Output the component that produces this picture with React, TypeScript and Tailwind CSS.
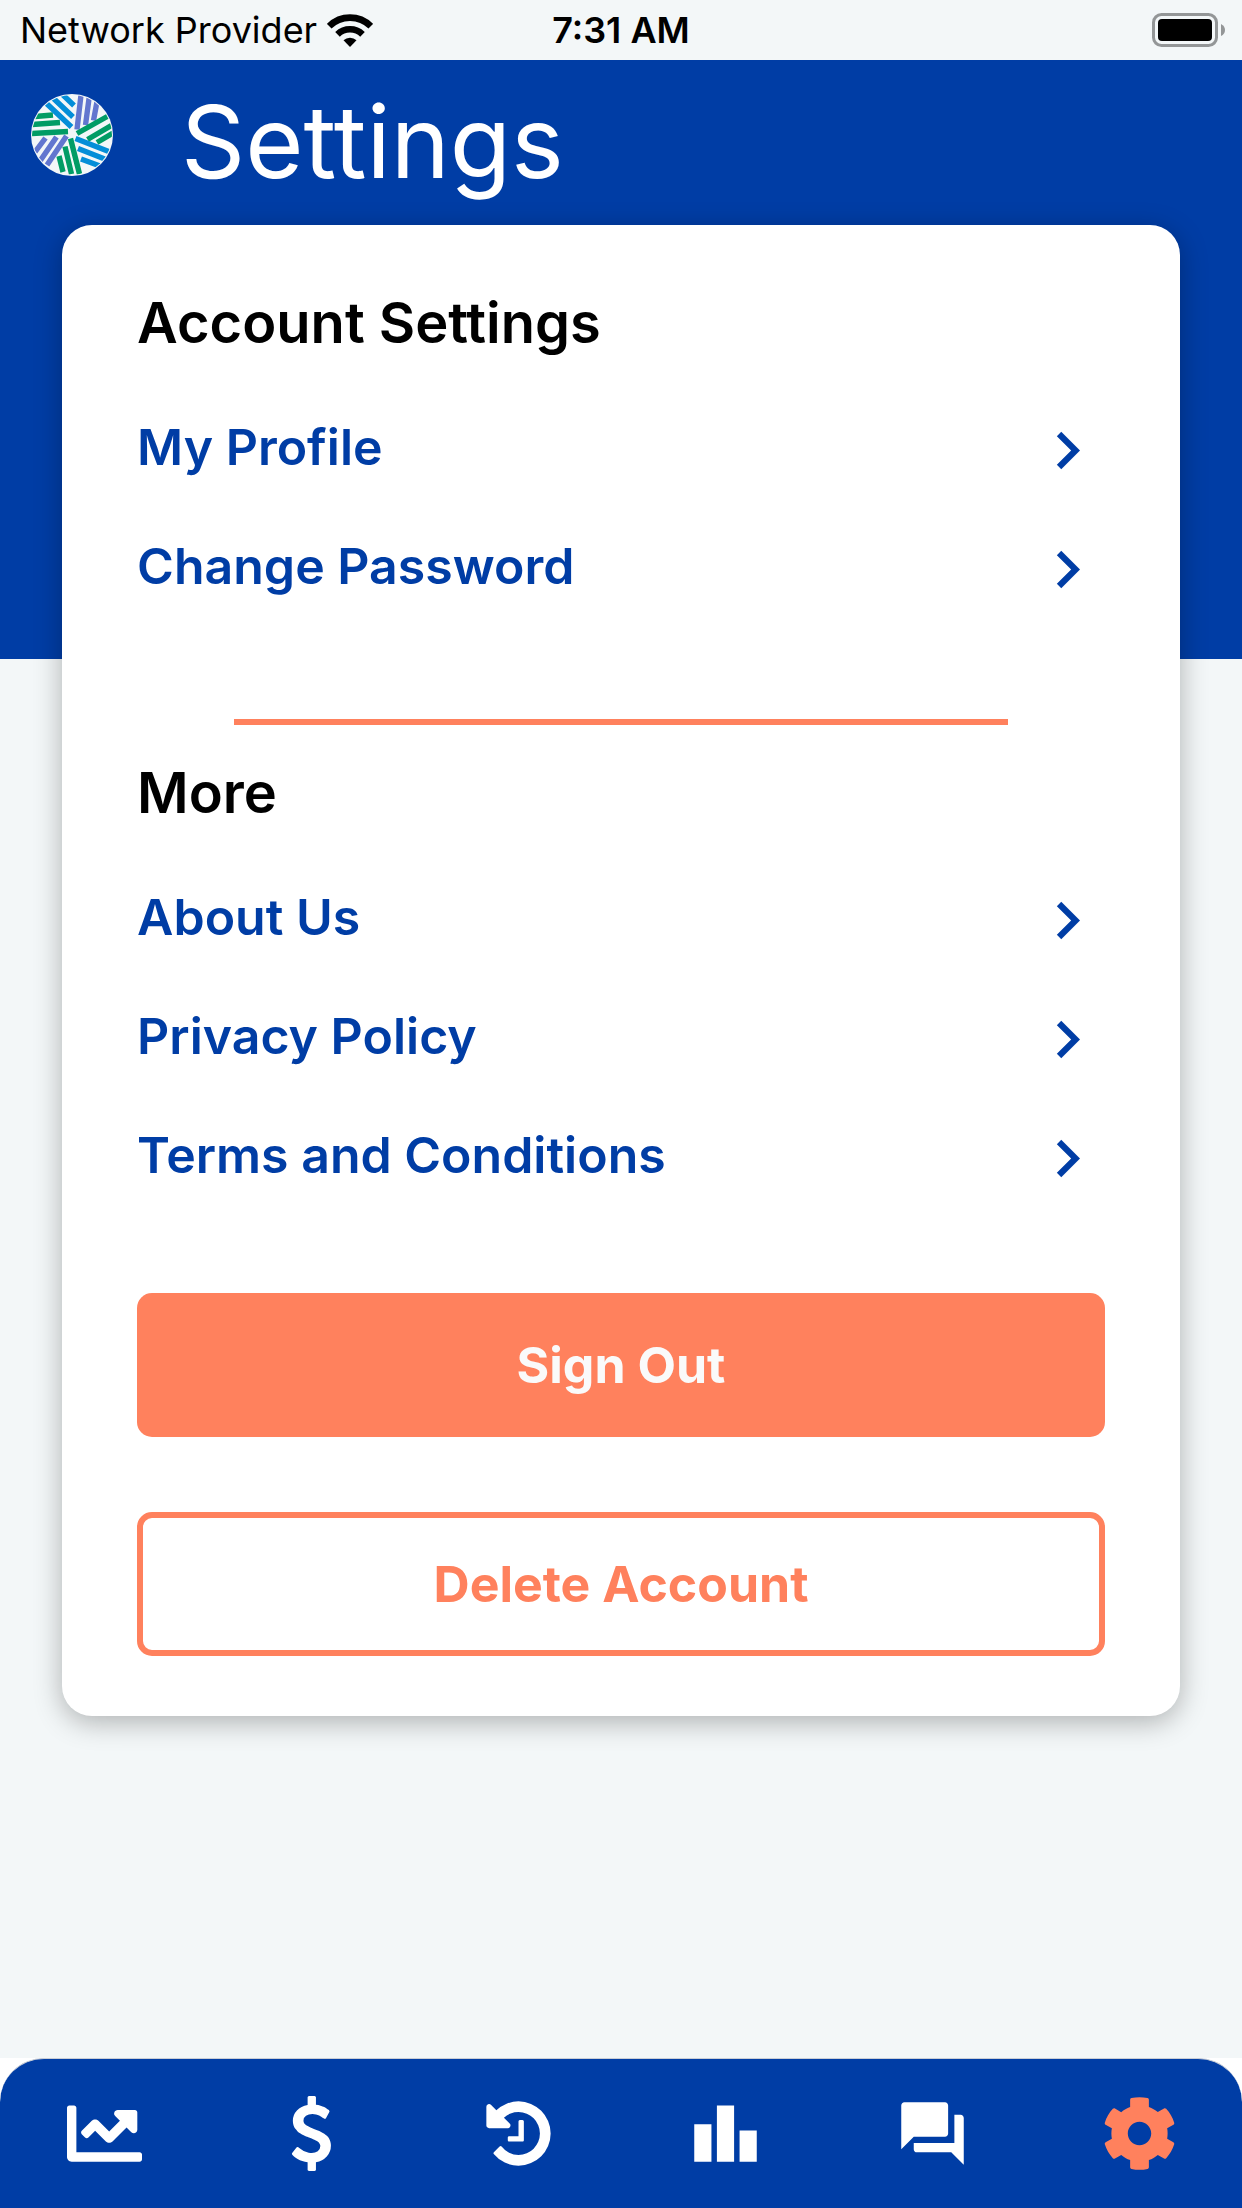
import { FaChartLine, FaCog } from "react-icons/fa";
import { MdChevronRight, MdLeaderboard, MdQuestionAnswer } from "react-icons/md";

const STRIPES = [
  { color: "#6276cf", d: "M46 35.5L50 1M54.500 31L58.500 1M62.500 26.500L66.500 5" },
  { color: "#019c65", d: "M46 39.500L78 21.500M56.500 45.500L82 30.500M66 48.500L82 39" },
  { color: "#048ed8", d: "M44.500 44.500L79 58M47 54.500L75 65.500M50 65L69 72" },
  { color: "#019c65", d: "M39.500 44.500L48.500 80M34 52.500L40.500 80M28 62L32 78" },
  { color: "#6276cf", d: "M35.500 42L16 71M25.500 43L9 67M14.500 44L4 58" },
  { color: "#019c65", d: "M0 39.500L37 37.500M1 30.500L29 28.500M4 22.500L22 21" },
  { color: "#048ed8", d: "M40.500 33L15 9M42 23L21 3M43 11.500L31 0" },
];

function Logo() {
  return (
    <svg viewBox="0 0 82 82" className="size-[82px] shrink-0" role="img" aria-label="Logo">
      <defs>
        <clipPath id="disc">
          <circle cx="41" cy="41" r="40" />
        </clipPath>
      </defs>
      <circle cx="41" cy="41" r="41" fill="#f3f7f8" />
      <g clipPath="url(#disc)" strokeWidth="5.400" fill="none">
        {STRIPES.map((s) => (
          <path key={s.d} d={s.d} stroke={s.color} />
        ))}
      </g>
    </svg>
  );
}

function WifiIcon() {
  return (
    <svg viewBox="0 0 46 33" className="h-[33px] w-[46px]" aria-hidden="true">
      <g fill="none" stroke="#000" strokeWidth="6.600">
        <path d="M2.200 12.200A29.500 29.500 0 0 1 43.800 12.200" />
        <path d="M10.500 20.300A18 18 0 0 1 35.500 20.300" />
      </g>
      <path d="M16.500 26.300A9.500 9.500 0 0 1 29.500 26.300L23 33z" />
    </svg>
  );
}

function BatteryIcon() {
  return (
    <svg viewBox="0 0 74 34" className="h-[34px] w-[74px]" role="img" aria-label="Battery full">
      <rect x="1.500" y="1.500" width="63" height="31" rx="8" fill="none" stroke="#939697" strokeWidth="3" />
      <rect x="6" y="6" width="54" height="22" rx="4" />
      <path d="M69 11q4 2 4 6t-4 6z" fill="#939697" />
    </svg>
  );
}

function DollarIcon() {
  return (
    <svg viewBox="0 0 1024 1792" className="h-[75px]" fill="currentColor" aria-hidden="true">
      <path d="M978 1185q0 153-99.500 263.500t-258.500 136.500v175q0 14-9 23t-23 9h-135q-13 0-22.500-9.500t-9.500-22.500v-175q-66-9-127.500-31t-101.500-44.500-74-48-46.500-37.500-17.500-18q-17-21-2-41l103-135q7-10 23-12 15-2 24 9l2 2q113 99 243 125 37 8 74 8 81 0 142.500-43t61.500-122q0-28-15-53t-33.500-42-58.500-37.500-66-32-80-32.500q-39-16-61.500-25t-61.500-26.500-62.500-31-56.500-35.500-53.500-42.500-43.500-49-35.500-58-21-66.500-8.500-78q0-138 98-242t255-134v-180q0-13 9.500-22.500t22.500-9.500h135q14 0 23 9t9 23v176q57 6 110.500 23t87 33.500 63.500 37.500 39 29 15 14q17 18 5 38l-81 146q-8 15-23 16-14 3-27-7-3-3-14.500-12t-39-26.500-58.500-32-74.500-26-85.500-11.500q-95 0-155 43t-60 111q0 26 8.500 48t29.500 41.500 39.500 33 56 31 60.500 27 70 27.500q53 20 81 31.500t76 35 75.500 42.500 62 50 53 63.500 31.500 76.500 13 94z" />
    </svg>
  );
}

function HistoryIcon() {
  return (
    <svg viewBox="0 0 1792 1792" className="size-[75px]" fill="currentColor" aria-hidden="true">
      <path d="M1664 896q0 156-61 298t-164 245-245 164-298 61q-172 0-327-72.500t-264-204.500q-7-10-6.500-22.500t8.500-20.500l137-138q10-9 25-9 16 2 23 12 73 95 179 147t225 52q104 0 198.500-40.500t163.500-109.500 109.500-163.500 40.500-198.500-40.500-198.500-109.500-163.500-163.500-109.500-198.500-40.500q-98 0-188 35.500t-160 101.500l137 138q31 30 14 69-17 40-59 40h-448q-26 0-45-19t-19-45v-448q0-42 40-59 39-17 69 14l130 129q107-101 244.500-156.500t284.500-55.500q156 0 298 61t245 164 164 245 61 298zm-640-288v448q0 14-9 23t-23 9h-320q-14 0-23-9t-9-23v-64q0-14 9-23t23-9h224v-352q0-14 9-23t23-9h64q14 0 23 9t9 23z" />
    </svg>
  );
}

function Section({ title, items }: { title: string; items: string[] }) {
  return (
    <section>
      <h2 className="text-[56px] leading-[80px] font-semibold text-black">{title}</h2>
      <ul className="mt-7">
        {items.map((item) => (
          <li key={item}>
            <a href="#" className="flex h-[119px] items-center justify-between text-[#003da5]">
              <span className="pb-2 text-[50px] leading-[72px] font-semibold">{item}</span>
              <MdChevronRight className="size-[75px]" aria-hidden="true" />
            </a>
          </li>
        ))}
      </ul>
    </section>
  );
}

const TABS = [
  { label: "Trends", icon: <FaChartLine className="size-[75px]" /> },
  { label: "Payments", icon: <DollarIcon /> },
  { label: "History", icon: <HistoryIcon /> },
  { label: "Leaderboard", icon: <MdLeaderboard className="size-[75px]" /> },
  { label: "Messages", icon: <MdQuestionAnswer className="size-[75px]" /> },
  { label: "Settings", icon: <FaCog className="size-[75px]" />, active: true },
];

export default function App() {
  return (
    <div className="flex min-h-screen flex-col bg-[#f3f7f8] font-['Inter','Liberation_Sans',sans-serif]">
      <div className="grid h-[60px] grid-cols-3 items-center px-4 text-[36px] leading-[44px] text-black">
        <div className="flex items-center gap-2.5 pl-1 whitespace-nowrap">
          <span>Network Provider</span>
          <WifiIcon />
        </div>
        <div className="text-center font-semibold">7:31 AM</div>
        <div className="flex justify-end">
          <BatteryIcon />
        </div>
      </div>

      <header className="flex items-start bg-[#003da5] px-[31px] pt-[34px] pb-[434px]">
        <Logo />
        <h1 className="ml-[68px] h-[131px] text-[100px] leading-[96px] text-white">Settings</h1>
      </header>

      <main className="mx-[5%] -mt-[434px] mb-24 rounded-[30px] bg-white px-[75px] pt-[58px] pb-[60px] shadow-[0_6px_28px_rgba(0,0,0,0.29)]">
        <Section title="Account Settings" items={["My Profile", "Change Password"]} />
        <hr className="mx-auto mt-[90px] mb-7 w-4/5 border-t-[6px] border-[#ff815d]" />
        <Section title="More" items={["About Us", "Privacy Policy", "Terms and Conditions"]} />
        <button
          type="button"
          className="mt-[75px] block h-36 w-full rounded-[15px] bg-[#ff815d] text-[50px] leading-[72px] font-bold text-[#fafafa]"
        >
          Sign Out
        </button>
        <button
          type="button"
          className="mt-[75px] block h-36 w-full rounded-[15px] border-[6px] border-[#ff815d] bg-white text-[50px] leading-[72px] font-bold text-[#ff815d]"
        >
          Delete Account
        </button>
      </main>

      <div className="mt-auto bg-white">
        <nav className="grid h-[150px] grid-cols-6 rounded-t-[44px] border-t border-[#c9ced6] bg-[#003da5]">
          {TABS.map((tab) => (
            <a
              key={tab.label}
              href="#"
              aria-label={tab.label}
              aria-current={tab.active ? "page" : undefined}
              className={
                tab.active
                  ? "flex items-center justify-center pl-0.5 text-[#ff815d]"
                  : "flex items-center justify-center pl-0.5 text-white"
              }
            >
              {tab.icon}
            </a>
          ))}
        </nav>
      </div>
    </div>
  );
}
